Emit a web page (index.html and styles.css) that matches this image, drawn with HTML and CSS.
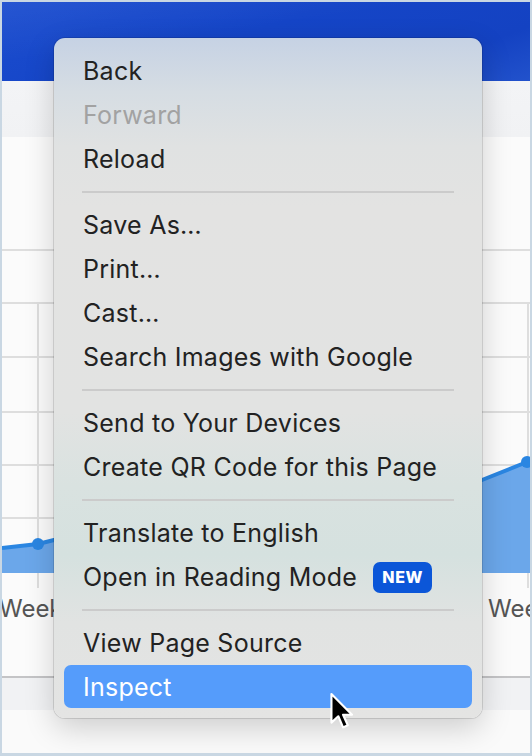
FILE: index.html
```html
<!DOCTYPE html>
<html>
<head>
<meta charset="utf-8">
<link rel="stylesheet" href="styles.css">
</head>
<body>
<div class="frame">
  <div class="header"></div>
  <div class="band"></div>
  <div class="card">
    <svg class="chart" width="528" height="541" viewBox="0 0 528 541">
      <g stroke="#dedede" stroke-width="2">
        <line x1="0" y1="113" x2="528" y2="113"/>
        <line x1="0" y1="166" x2="528" y2="166"/>
        <line x1="0" y1="220" x2="528" y2="220"/>
        <line x1="0" y1="275" x2="528" y2="275"/>
        <line x1="0" y1="328" x2="528" y2="328"/>
        <line x1="0" y1="381" x2="528" y2="381"/>
        <line x1="36" y1="166" x2="36" y2="451"/>
        <line x1="526" y1="166" x2="526" y2="451"/>
      </g>
      <polygon fill="#6ba7ea" points="0,411 36,407 52,403 480,343 525,325 540,318 540,436 0,436"/>
      <polyline fill="none" stroke="#2a86e2" stroke-width="4" stroke-linejoin="round" points="0,411 36,407 52,403 480,343 525,325 540,318"/>
      <circle cx="36" cy="407" r="6" fill="#2a86e2"/>
      <circle cx="525" cy="325" r="6" fill="#2a86e2"/>
      <text x="37" y="480" class="axis" text-anchor="middle">Week 1</text>
      <text x="529" y="480" class="axis" text-anchor="middle">Week 4</text>
    </svg>
  </div>
  <div class="band2"></div>
  <div class="foot"></div>

  <div class="menu">
    <div class="item">Back</div>
    <div class="item disabled">Forward</div>
    <div class="item">Reload</div>
    <div class="sep"></div>
    <div class="item">Save As…</div>
    <div class="item">Print…</div>
    <div class="item">Cast…</div>
    <div class="item">Search Images with Google</div>
    <div class="sep"></div>
    <div class="item">Send to Your Devices</div>
    <div class="item">Create QR Code for this Page</div>
    <div class="sep"></div>
    <div class="item">Translate to English</div>
    <div class="item">Open in Reading Mode <span class="badge">NEW</span></div>
    <div class="sep"></div>
    <div class="item">View Page Source</div>
    <div class="item active">Inspect</div>
  </div>

  <svg class="cursor" width="26" height="38" viewBox="0 0 24 36">
    <path d="M2 2 L2 29 L8.5 23 L13 33.5 L17.5 31.5 L13 21.5 L21.5 21.5 Z" fill="#000" stroke="#fff" stroke-width="2" stroke-linejoin="round"/>
  </svg>
</div>
</body>
</html>
```

FILE: styles.css
```css
html, body {
  margin: 0;
  padding: 0;
}
body {
  width: 532px;
  height: 756px;
  overflow: hidden;
  background: #c9d7e3;
  font-family: Inter, "Noto Sans", sans-serif;
}
.frame {
  position: relative;
  margin: 2px 2px 0 2px;
  width: 528px;
  height: 751px;
  display: flex;
  flex-direction: column;
  overflow: hidden;
  background: #fafafa;
}
.header {
  height: 79px;
  flex: none;
  background:
    linear-gradient(172deg, rgba(255,255,255,0.05) 0%, rgba(255,255,255,0.0) 40%),
    linear-gradient(160deg, #1b4dcf 0%, #1545c7 45%, #1442c2 80%, #2252cc 100%);
}
.band {
  height: 56px;
  flex: none;
  background: linear-gradient(180deg, #f3f4f6, #f1f2f4);
}
.card {
  height: 541px;
  flex: none;
  background: #fbfbfb;
  border-bottom: 2px solid #c4c4c6;
  box-sizing: border-box;
}
.chart {
  display: block;
}
.axis {
  font-family: Inter, "Noto Sans", sans-serif;
  font-size: 24px;
  fill: #555;
}
.band2 {
  height: 32px;
  flex: none;
  background: #f1f2f4;
}
.foot {
  flex: 1;
  background: #fafafa;
}
.menu {
  position: absolute;
  left: 52px;
  top: 36px;
  width: 428px;
  height: 680px;
  box-sizing: border-box;
  padding: 11px 10px 9px 10px;
  border-radius: 11px;
  background: linear-gradient(180deg, #c6d2e4 0%, #d6dde3 8%, #e0e2e2 16%, #e3e3e2 25%, #e2e3e2 55%, #d9e2e0 66%, #d5e1df 76%, #e1e3e2 86%, #e4e4e3 100%);
  box-shadow: 0 0 0 1px rgba(0,0,0,0.12), 0 10px 30px rgba(0,0,0,0.18);
}
.item {
  height: 44px;
  display: flex;
  align-items: center;
  padding-left: 19px;
  font-size: 25px;
  letter-spacing: 0.25px;
  color: #222;
  border-radius: 7px;
  white-space: nowrap;
}
.item.disabled {
  color: #a2a2a2;
}
.item.active {
  background: #559cfb;
  color: #fff;
  height: 43px;
}
.sep {
  height: 2px;
  margin: 10px 18px 10px 18px;
  background: #cbcbcb;
}
.badge {
  margin-left: 16px;
  display: inline-flex;
  align-items: center;
  justify-content: center;
  width: 59px;
  height: 31px;
  border-radius: 7px;
  background: #0b56d8;
  color: #fff;
  font-size: 16px;
  font-weight: 800;
  letter-spacing: 0.6px;
}
.cursor {
  position: absolute;
  left: 327px;
  top: 690px;
}
```
